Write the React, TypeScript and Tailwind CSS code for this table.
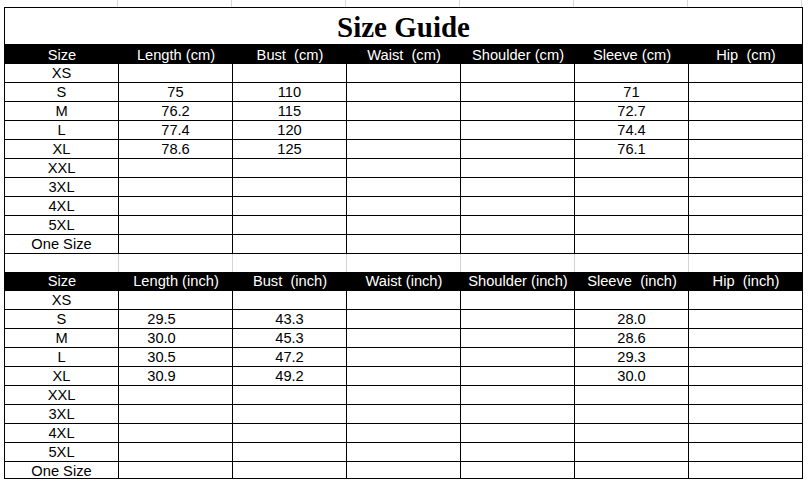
import React from "react";

const sizes = ["XS", "S", "M", "L", "XL", "XXL", "3XL", "4XL", "5XL", "One Size"];

const cmHeaders = ["Size", "Length (cm)", "Bust  (cm)", "Waist  (cm)", "Shoulder (cm)", "Sleeve (cm)", "Hip  (cm)"];
const inchHeaders = ["Size", "Length (inch)", "Bust  (inch)", "Waist (inch)", "Shoulder (inch)", "Sleeve  (inch)", "Hip  (inch)"];

// length, bust, waist, shoulder, sleeve, hip
const cmData: Record<string, string[]> = {
    S: ["75", "110", "", "", "71", ""],
    M: ["76.2", "115", "", "", "72.7", ""],
    L: ["77.4", "120", "", "", "74.4", ""],
    XL: ["78.6", "125", "", "", "76.1", ""],
};

const inchData: Record<string, string[]> = {
    S: ["29.5", "43.3", "", "", "28.0", ""],
    M: ["30.0", "45.3", "", "", "28.6", ""],
    L: ["30.5", "47.2", "", "", "29.3", ""],
    XL: ["30.9", "49.2", "", "", "30.0", ""],
};

interface SectionProps {
    headers: string[];
    data: Record<string, string[]>;
    headerClass: string;
    lastShort?: boolean;
    lengthShift?: boolean;
}

function Section({headers, data, headerClass, lastShort, lengthShift}: SectionProps) {
    return (
        <>
            <div className={`grid grid-cols-[repeat(7,114px)] bg-black text-white ${headerClass}`}>
                {headers.map((h) => (
                    <div key={h} className="text-center whitespace-pre">{h}</div>
                ))}
            </div>
            {sizes.map((s, i) => {
                const vals = data[s] ?? ["", "", "", "", "", ""];
                const rowH = lastShort && i === sizes.length - 1 ? "h-[17px]" : "h-[19px]";
                return (
                    <div key={s} className="grid grid-cols-[repeat(7,114px)]">
                        {[s, ...vals].map((v, j) => (
                            <div
                                key={j}
                                className={`${rowH} border-r border-b border-black text-center leading-[19px] whitespace-pre ${lengthShift && j === 1 ? "pr-[28px]" : ""}`}
                            >
                                {v}
                            </div>
                        ))}
                    </div>
                );
            })}
        </>
    );
}

export default function App() {
    return (
        <div className="w-[809px] h-[484px] overflow-hidden bg-white text-black font-['Liberation_Sans',Arial,sans-serif] text-[14.67px]">
            {/* sheet gridlines above the table */}
            <div className="h-[7px] pl-[4px] flex">
                {Array.from({length: 7}).map((_, i) => (
                    <div key={i} className="w-[114px] border-r border-[#d9d9d9]"/>
                ))}
            </div>
            <div className="ml-[4px] w-[799px] border-l border-t border-black">
                <div className="h-[36px] border-r border-black text-center font-['Liberation_Serif','Times_New_Roman',serif] font-bold text-[29px] leading-[38px]">
                    Size Guide
                </div>
                <Section headers={cmHeaders} data={cmData} headerClass="h-[20px] leading-[22px]"/>
                <div className="grid grid-cols-[repeat(7,114px)] h-[18px]">
                    {Array.from({length: 7}).map((_, i) => (
                        <div key={i} className={`border-r ${i === 6 ? "border-black" : "border-[#d4d4d4]"}`}/>
                    ))}
                </div>
                <Section headers={inchHeaders} data={inchData} headerClass="h-[19px] leading-[19px]" lastShort lengthShift/>
            </div>
        </div>
    );
}
